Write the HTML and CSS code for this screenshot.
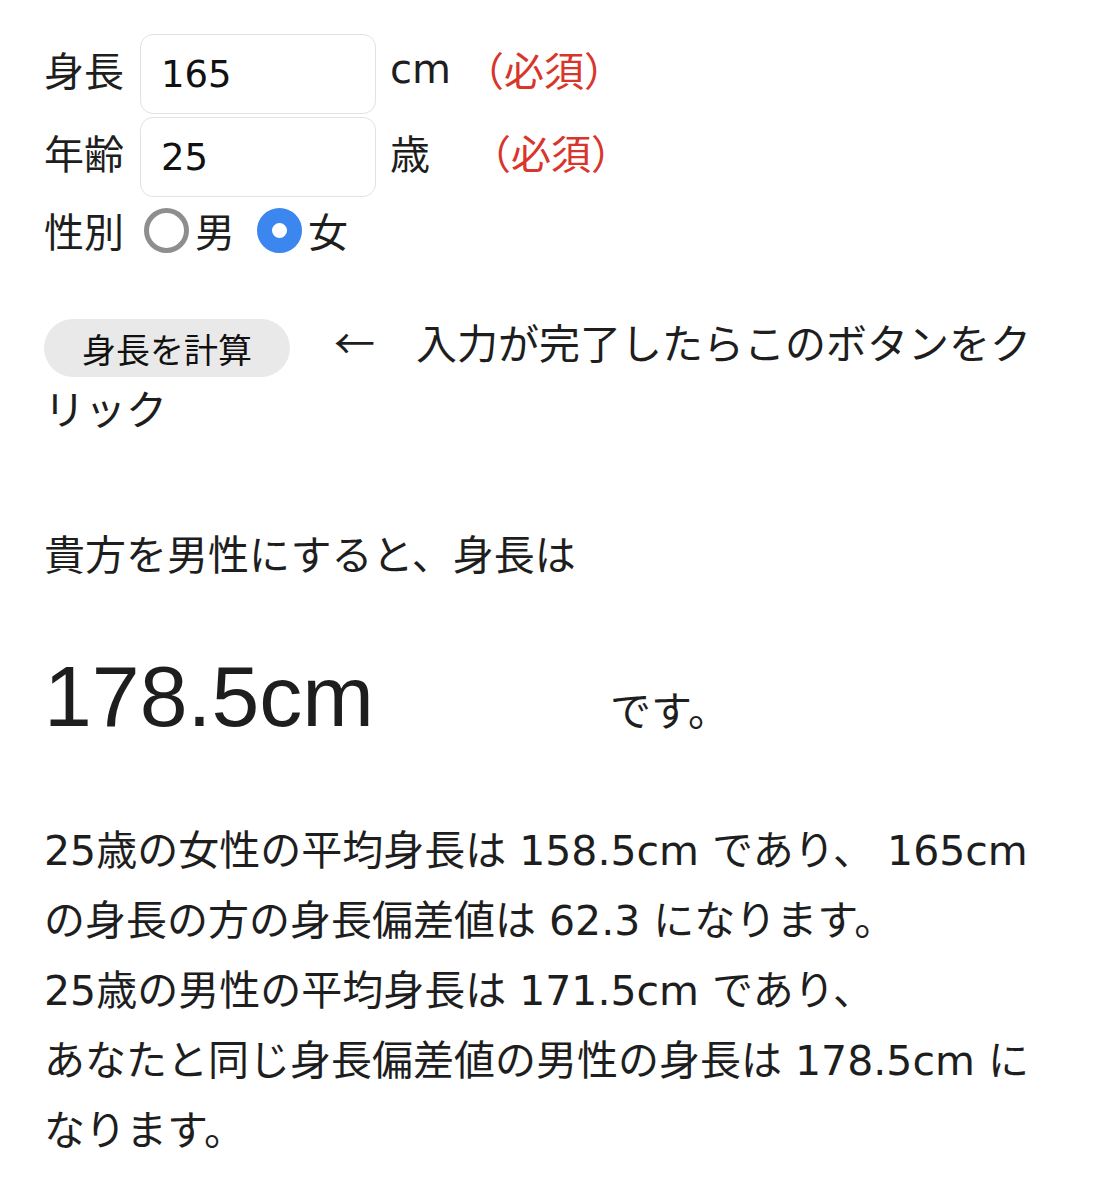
FILE: index.html
```html
<!DOCTYPE html>
<html lang="ja">
<head>
  <meta charset="UTF-8">
  <title>身長偏差値 計算</title>
  <link rel="stylesheet" href="styles.css">
</head>
<body>

<form class="calc" onsubmit="return false;">
  <div class="row">
    <label class="label" for="height">身長</label>
    <input class="field" id="height" type="text" value="165">
    <span class="unit">cm</span>
    <span class="required">（必須）</span>
  </div>
  <div class="row">
    <label class="label" for="age">年齢</label>
    <input class="field" id="age" type="text" value="25">
    <span class="unit">歳</span>
    <span class="required shifted">（必須）</span>
  </div>
  <div class="row gender">
    <span class="label">性別</span>
    <label class="choice"><input type="radio" name="sex" value="m"><span>男</span></label>
    <label class="choice"><input type="radio" name="sex" value="f" checked><span>女</span></label>
  </div>
</form>

<p class="hint">
  <button class="calc-button" type="button">身長を計算</button>
  <span class="arrow">←</span>　入力が完了したらこのボタンをクリック
</p>

<div class="result">
  <p class="lead">貴方を男性にすると、身長は</p>
  <p class="answer"><span class="big">178.5cm</span><span class="desu">です。</span></p>
  <p class="detail">
    25歳の女性の平均身長は 158.5cm であり、 165cm の身長の方の身長偏差値は 62.3 になります。<br>
    25歳の男性の平均身長は 171.5cm であり、<br>
    あなたと同じ身長偏差値の男性の身長は 178.5cm になります。
  </p>
</div>

</body>
</html>
```

FILE: styles.css
```css
body {
  font-family: "DejaVu Sans", "Noto Sans CJK JP", sans-serif;
  color: #1e1e1e;
  background: #fff;
  margin: 0;
  padding: 34px 44px 20px 44px;
  font-size: 40px;
}

.calc {
  margin: 0;
}

.row {
  display: flex;
  align-items: center;
  margin-bottom: 3px;
}

.label {
  width: 96px;
  margin-bottom: 10px;
}

.field {
  width: 236px;
  height: 80px;
  box-sizing: border-box;
  border: 1.5px solid #e2e2e2;
  border-radius: 13px;
  padding: 0 20px;
  font-family: "DejaVu Sans", "Noto Sans CJK JP", sans-serif;
  font-size: 37px;
  color: #111;
  background: #fff;
}

.unit {
  width: 80px;
  margin-left: 14px;
  margin-bottom: 10px;
}

.required {
  color: #d8352b;
  margin-left: -6px;
  margin-bottom: 10px;
}

.required.shifted {
  margin-left: 1px;
}

.gender {
  height: 68px;
  margin-top: -4px;
}

.gender .label {
  margin-bottom: 0;
}

.choice {
  display: flex;
  align-items: center;
  margin-right: 18px;
}

.choice span {
  font-family: "Noto Sans CJK JP", sans-serif;
}

.choice input {
  appearance: none;
  -webkit-appearance: none;
  width: 45px;
  height: 45px;
  margin: 0 6px 0 4px;
  border: 5px solid #8e8e8e;
  border-radius: 50%;
  box-sizing: border-box;
  background: #fff;
}

.choice input:checked {
  border: 15px solid #3b86ef;
  background: #fff;
}

.hint {
  margin: 44px 0 0 0;
  font-size: 41px;
  line-height: 66px;
}

.arrow {
  font-family: "Noto Sans CJK JP", sans-serif;
}

.calc-button {
  font-family: "Noto Sans CJK JP", sans-serif;
  font-size: 34px;
  color: #111;
  background: #e9e9e9;
  border: none;
  border-radius: 29px;
  height: 58px;
  width: 246px;
  margin-right: 31px;
  vertical-align: middle;
  cursor: pointer;
}

.result {
  margin-top: 82px;
}

.lead {
  margin: 0;
  font-size: 41px;
  line-height: 60px;
}

.answer {
  display: flex;
  align-items: baseline;
  margin: 50px 0 0 0;
}

.big {
  font-family: "Liberation Sans", "Noto Sans CJK JP", sans-serif;
  font-size: 86px;
  width: 566px;
  line-height: 120px;
}

.desu {
  font-size: 41px;
}

.detail {
  margin: 60px 0 0 0;
  font-size: 41px;
  line-height: 70px;
}
```
